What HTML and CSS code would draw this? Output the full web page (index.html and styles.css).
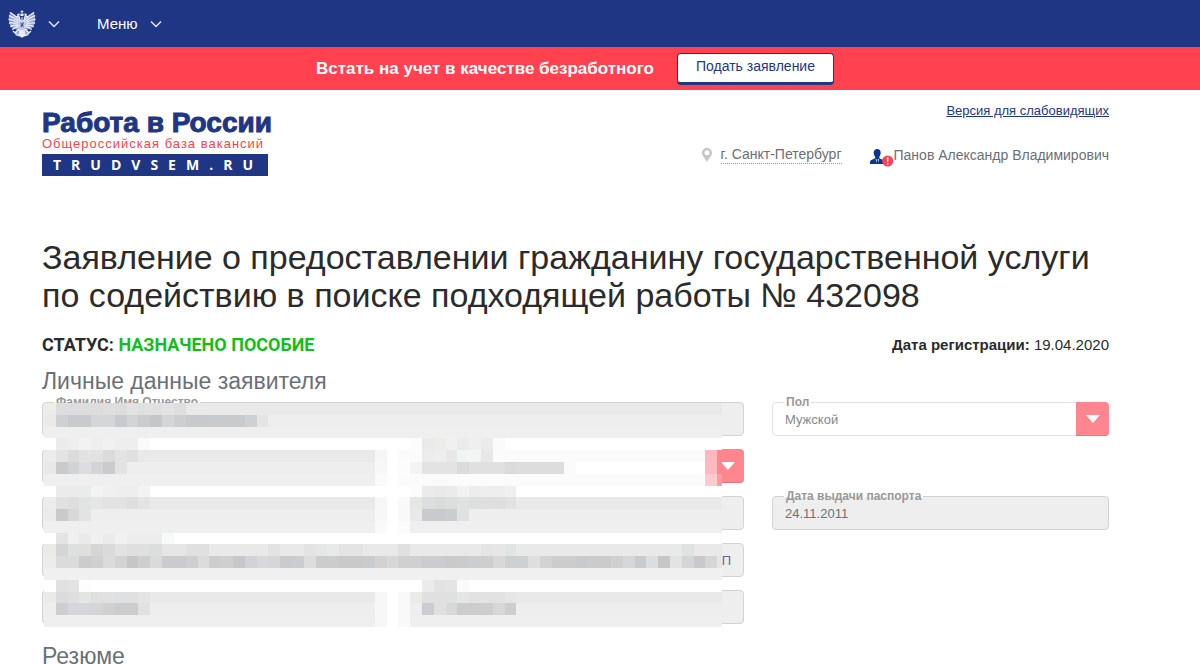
FILE: index.html
```html
<!DOCTYPE html>
<html lang="ru">
<head>
<meta charset="utf-8">
<meta name="viewport" content="width=device-width, initial-scale=1">
<title>Работа в России</title>
<link rel="stylesheet" href="styles.css">
</head>
<body>
<nav class="topbar">
  <button class="topbar-item" type="button" aria-label="Герб">
    <svg class="eagle" viewBox="0 0 28 28" aria-hidden="true">
      <path fill="#8f9dca" d="M2 3L10 8.500L14 7L18 8.500L26 3L27.500 9L25.500 17L19 20L21 25L14 27.500L7 25L9 20L2.500 17L.5 9z"/>
      <g fill="none" stroke="#e8edf9" stroke-linecap="round">
        <path stroke-width="1.3" d="M10.500 9.500C8 6.500 5 4 2.300 2.600M9.800 11C7 8.500 4 6.500 1.300 5.800M9.500 12.500C7 10.800 3.800 9.500 1 9.300M9.500 14C7 13 4 12.500 1.500 13M9.700 15.500C7.500 15 5 15.300 2.800 16.400M10 17C8 17 6 18 4.700 19.300M17.500 9.500C20 6.500 23 4 25.700 2.600M18.200 11C21 8.500 24 6.500 26.700 5.800M18.500 12.500C21 10.800 24.200 9.500 27 9.300M18.500 14C21 13 24 12.500 26.500 13M18.300 15.500C20.500 15 23 15.300 25.200 16.400M18 17C20 17 22 18 23.300 19.300"/>
        <path stroke-width="1.6" d="M12.500 11C11.500 9 11.800 7.500 10.300 6.200L8.300 7M15.500 11C16.500 9 16.200 7.500 17.700 6.200L19.700 7M11 19L7.500 22.500M17 19L20.500 22.500M5.500 21.500L8.500 24M22.500 21.500L19.500 24"/>
        <path stroke-width="1" d="M14 .7V3M13 1.600H15M9.500 4.600L11 3.800M18.500 4.600L17 3.800"/>
      </g>
      <path fill="#e8edf9" d="M12.200 3.300L13 4.200L14 2.700L15 4.200L15.800 3.300L15.500 6H12.500zM9.200 4L10.800 4.500L12 3.900L11.300 5.800H9.400zM18.800 4L17.200 4.500L16 3.900L16.700 5.800H18.600zM11.500 19C12.500 20.500 15.500 20.500 16.500 19L17.500 24L20 25.500L16.500 26L14 27.700L11.500 26L8 25.500L10.500 24z"/>
      <path fill="#aab5d8" stroke="#e8edf9" d="M11 11H17V16.500C17 18 15 19 14 19.500C13 19 11 18 11 16.500z"/>
      <path fill="none" stroke="#1f3684" stroke-width=".8" d="M12.700 13L15.300 16.500M15.500 12.500L13 17M12.500 7.500V9.500M15.500 7.500V9.500"/>
    </svg>
    <svg class="chevron" viewBox="0 0 12 8" aria-hidden="true"><path d="M1 1.500L6 6.500L11 1.500"/></svg>
  </button>
  <button class="topbar-item menu" type="button">Меню
    <svg class="chevron" viewBox="0 0 12 8" aria-hidden="true"><path d="M1 1.500L6 6.500L11 1.500"/></svg>
  </button>
</nav>

<section class="banner">
  <strong class="banner-text">Встать на учет в качестве безработного</strong>
  <button class="banner-button" type="button">Подать заявление</button>
</section>

<header class="page header">
  <a class="logo" href="#">
    <span class="logo-name">Работа в России</span>
    <span class="logo-sub">Общероссийская база вакансий</span>
    <span class="logo-site">TRUDVSEM.RU</span>
  </a>
  <div class="header-side">
    <a class="vision" href="#">Версия для слабовидящих</a>
    <div class="account">
      <a class="city" href="#">
        <svg class="pin" viewBox="0 0 10 14" aria-hidden="true"><path fill="#c4c4c4" fill-rule="evenodd" d="M5 0C2.200 0 0 2.100 0 4.900C0 8 3.300 10 5 14C6.700 10 10 8 10 4.900C10 2.100 7.800 0 5 0zM5 2.300A2.500 2.500 0 1 1 5 7.300A2.500 2.500 0 0 1 5 2.300z"/></svg>
        <span class="city-name">г. Санкт-Петербург</span>
      </a>
      <a class="user" href="#">
        <svg class="user-icon" viewBox="0 0 24 18" aria-hidden="true">
          <path fill="#0b3590" d="M7.200 0C9.300 0 10.800 1.400 10.700 3.800C10.600 6 9.800 7.200 9.300 7.900V9.300C11 10.300 14 10.600 14.300 12.500V15H0V13C.3 10.800 3.500 10.300 5.200 9.300V7.900C4.600 7.200 3.800 6 3.700 3.800C3.600 1.400 5.200 0 7.200 0z"/>
          <path fill="#fff" d="M5.500 9.800L7.200 11L9 9.800L8 14H6.500z"/>
          <path fill="#0b3590" d="M6.700 11H7.800L8.200 14H6.300z"/>
          <circle cx="17.700" cy="12" r="5.500" fill="#ff4150"/>
          <path fill="#fff" d="M16.800 8.300H18.600L18.200 13H17.200zM16.900 14H18.500V15.500H16.900z"/>
        </svg>Панов Александр Владимирович</a>
    </div>
  </div>
</header>

<main class="page">
  <h1 class="title">Заявление о предоставлении гражданину государственной услуги по содействию в поиске подходящей работы № 432098</h1>
  <div class="status-row">
    <p class="status">СТАТУС: <span class="status-value">НАЗНАЧЕНО ПОСОБИЕ</span></p>
    <p class="registered"><strong>Дата регистрации:</strong> 19.04.2020</p>
  </div>
  <h2 class="section-title">Личные данные заявителя</h2>
  <form class="form">
    <div class="field wide locked">
      <label class="label" for="name">Фамилия Имя Отчество</label>
      <input class="control" id="name" type="text" readonly>
    </div>
    <div class="field">
      <label class="label" for="sex">Пол</label>
      <select class="control" id="sex"><option>Мужской</option></select>
      <span class="arrow"></span>
    </div>
    <div class="field locked start"><input class="control" type="text" readonly></div>
    <div class="field"><select class="control"></select><span class="arrow"></span></div>
    <div class="field locked start"><input class="control" type="text" readonly></div>
    <div class="field locked"><input class="control" type="text" readonly></div>
    <div class="field locked">
      <label class="label" for="issued">Дата выдачи паспорта</label>
      <input class="control" id="issued" type="text" value="24.11.2011" readonly>
    </div>
    <div class="field wide locked start"><input class="control tail" type="text" value="П" readonly></div>
    <div class="field locked start"><input class="control" type="text" readonly></div>
    <div class="field locked"><input class="control" type="text" readonly></div>
    <svg class="mosaic" id="mosaic" viewBox="0 0 574 190" preserveAspectRatio="none" shape-rendering="crispEdges" aria-hidden="true"></svg>
  </form>
  <h2 class="section-title next">Резюме</h2>
</main>
<script src="mosaic.js"></script>
</body>
</html>
```
FILE: styles.css
```css
* { box-sizing: border-box; }

body {
  margin: 0;
  background: #fff;
  color: #2b2b2b;
  font-family: "Liberation Sans", Arial, sans-serif;
  font-size: 16px;
}

button, input, select { font: inherit; }
h1, h2, p { margin: 0; font-weight: 400; }

.topbar {
  display: flex;
  align-items: center;
  gap: 37px;
  height: 47px;
  padding: 0 8px;
  background: #1f3684;
}

.topbar-item {
  display: flex;
  align-items: center;
  gap: 12px;
  padding: 0;
  border: 0;
  background: none;
  color: #fff;
  font-size: 15px;
}

.eagle { width: 28px; height: 28px; }

.chevron {
  width: 12px;
  height: 8px;
  fill: none;
  stroke: #e4e8f5;
  stroke-width: 1.5;
}

.banner {
  display: flex;
  align-items: center;
  justify-content: center;
  gap: 23px;
  height: 43px;
  padding-right: 50px;
  background: #ff4150;
}

.banner-text { color: #fff; font-size: 17px; }

.banner-button {
  height: 32px;
  padding: 0 18px 4px;
  border: 1px solid #1f3684;
  border-bottom-width: 3px;
  border-radius: 4px;
  background: #fff;
  color: #1f3684;
  font-size: 14px;
}

.page { padding: 0 91px 0 42px; }

.header {
  display: flex;
  justify-content: space-between;
  height: 148px;
  padding-top: 12px;
}

.logo {
  display: flex;
  flex-direction: column;
  margin-top: 7px;
  text-decoration: none;
  white-space: nowrap;
}

.logo-name {
  color: #1f3684;
  font-size: 28px;
  font-weight: 700;
  line-height: 28px;
  -webkit-text-stroke: 1px #1f3684;
}

.logo-sub {
  color: #ff4150;
  font-size: 13px;
  line-height: 13px;
  letter-spacing: 1px;
}

.logo-site {
  width: 226px;
  margin-top: 4px;
  padding-left: 11px;
  background: #1f3684;
  color: #fff;
  font-family: "Open Sans", sans-serif;
  font-size: 14px;
  font-weight: 700;
  line-height: 22px;
  letter-spacing: 10px;
}

.header-side {
  display: flex;
  flex-direction: column;
  align-items: flex-end;
  gap: 26px;
}

.vision { color: #1f3684; font-size: 13px; line-height: 17px; }
.account { display: flex; gap: 28px; }

.city, .user {
  display: flex;
  align-items: center;
  height: 20px;
  color: #6b6f74;
  font-size: 14px;
  line-height: 17px;
  text-decoration: none;
}

.city { gap: 9px; }
.city-name { border-bottom: 1px dotted #999; }
.pin { width: 10px; height: 14px; }
.user-icon { width: 24px; height: 18px; margin-top: 6px; }

.title {
  font-size: 34px;
  line-height: 38px;
}

.status-row {
  display: flex;
  align-items: center;
  justify-content: space-between;
  height: 32px;
  margin-top: 14px;
}

.status {
  font-family: Roboto, sans-serif;
  font-size: 18px;
  font-weight: 700;
}

.status-value { color: #15bd1c; }
.registered { font-size: 15px; }

.section-title {
  margin-top: 8px;
  color: #6a7077;
  font-size: 23px;
  line-height: 26px;
}

.form {
  position: relative;
  display: grid;
  grid-template-columns: repeat(3, 1fr);
  gap: 13px 28px;
  margin-top: 8px;
}

.field { position: relative; height: 34px; }
.wide { grid-column-end: span 2; }
.start { grid-column-start: 1; }

.control {
  display: block;
  width: 100%;
  height: 100%;
  padding: 0 12px;
  border: 1px solid #e2e2e2;
  border-radius: 4px;
  background: #fff;
  color: #85888b;
  font-size: 13px;
  appearance: none;
}

.locked .control { border-color: #d3d3d3; background: #eee; color: #6f7275; }
.locked .tail { color: #5b6b8c; text-align: right; }

.label {
  position: absolute;
  top: -7px;
  left: 12px;
  padding: 0 2px;
  background: linear-gradient(#fff 8px, transparent 8px);
  color: #999;
  font-size: 12px;
  font-weight: 700;
  line-height: 14px;
}

.arrow {
  position: absolute;
  inset: 0 0 0 auto;
  display: grid;
  place-items: center;
  width: 33px;
  border-bottom: 1px solid #e87680;
  border-radius: 0 4px 4px 0;
  background: #ff868f;
  pointer-events: none;
}

.arrow::before {
  content: "";
  border: 7px solid transparent;
  border-top: 8px solid #fff;
  border-bottom: 0;
}

.mosaic {
  position: absolute;
  top: 1px;
  left: 2px;
  width: 678px;
  height: 224px;
}

.next { margin-top: 19px; }
```
FILE: mosaic.js
```js
// Each row is a list of "first-last:colour" runs; later runs paint over earlier ones.
const rows = [
  "0-57:e9e9e9 0:ececea 1-4:dcdddc 5:dfdfdf 6:dcdcdc 7:e1e4e3 8-9:e0e0e0 10:e3e3e3 11:dedede",
  "0-57:eeeeee 0:ebeae9 1:ced1d4 2-3:c9cacd 4-5:d5d6d8 6:c9cacf 7:d3d4d6 8:cbccce 9:c5c6c8 10:d4d5d7 11:cdcecf 12-13:c8c9cc 14:c8cbcd 15-16:c8cacc 17:ced1d4 18:e3e5e5",
  "0-57:efefef",
  "0-57:ffffff 1:ebebe9 2:eeeeee 3:f2f2f2 4:eeeeee 5:f1f1f1 6-7:eeeeee 8:fafafa 31:fefcfa 32:e9eaec 33:ecece9 34:f0f0f0 35:ebebeb 36:efefef 37:ebebea 38:fbfbfb",
  "0-27:e9e9e9 28:f6f6f6 29:ffffff 30-55:fbfbfb 0:ececea 1:e3e3e3 2:dbdbdb 3-4:e2e2e2 5:dadada 6:e3e3e3 7:e0e0e0 32:ececec 33:eeeeec 34:e7e7e7 35:f0f4f3 36:f2f5f4 37:e8e8e8 56:ffb8bf 57:ff858e",
  "0-27:eeeeee 28:f7f7f7 29:ffffff 30:fcfcfc 31:f3f3f3 0:e8e8e8 1:c9cacc 2:d2d3d5 3:dcdde0 4:d4d4d4 5:cacbce 6:e2e3e2 32-34:e3e3e3 35:dbdbdb 36-38:e0e0e0 39:dadada 40-43:dddddd 44:fbfbfb 45-55:ffffff 56:ffb8bf 57:ff858e",
  "0-27:efefef 28:fafafa 29:ffffff 30-55:fbfbfb 56:ffc9cf 57:ff9aa3",
  "0-57:ffffff 1-2:ebebeb 3:e9ecec 4:f3f3f3 5:f0f0f0 6-7:eeeeee 8:f3f3f3 31:fefcfa 32:ebebeb 33:e9e9e9 34:ebebeb 35:f2f2f0 36:eceeee 37-38:eeeeee 39:f0f0f0",
  "0-57:e9e9e9 0:ececec 1:e0e0e0 2:dedede 3:e2e4e3 4:e6e6e6 5-6:e2e2e2 7:dedede 8:e4e4e4 28:f7f7f7 29:ffffff 30:f9f9f9 31:e6e7e5 32:dcdedd 33:dadcdc 34:dcdedd 35:dfe2e0 36:dddfdd 37:dfdfdf 38:dedede 39:e1e3e2",
  "0-57:eeeeee 0:ebebeb 1:cacaca 2:d7d8da 3:e1e3e4 28:f7f7f7 29:ffffff 30:f9f9f9 31:e8e8e8 32-33:c9cace 34:cacdd0 35:dfe1e1",
  "0-57:efefef 28:fafafa 29:ffffff 30:fbfbfb",
  "0-57:ffffff 1:e4e4e4 2:f0f0f0 3:eaeaea 4:f0f0ee 5:ebebeb 6:f1f1f1 7-9:ededed 10:f6f9f8",
  "0-57:e9e9e9 0:eaeae6 1:d5d5d5 2:dee0df 3:dfe0dc 4:d5d5d5 5:dadada 6:e2e2e2 7-8:dfdfdf 9:dbdedd 10-11:e6e6e6 12-13:e0e0e0 19:e1e4e3 22:e3e3e3 23:e4e7e6 25-26:e4e4e4 30:e0e0e0 37:e4e4e4 38:e6e6e6 39:e1e4e3 54:e0e2e1",
  "0:ececec 1-2:d9dbdc 3:cbcccd 4:cfd0d2 5:dadbdd 6:d2d4d2 7:c5c6c8 8:cdcecf 9:d9dadc 10-11:cacbcf 12:cecfd2 13:dcdcdc 14:cccdce 15:cecfcf 16:c8c8cb 17:d2d3d9 18:d8d9dd 19:d6d6d6 20:cacbce 21:cacdd0 22:dcdddf 23-24:cbcccd 25-26:c9c9ca 27:c8cccf 28:d2d2d2 29:d6d8d7 30-31:cfd0d2 32-33:cbccd0 34:cacaca 35:c8cccf 36:cccdcf 37:cdcfcd 38:d8d8d8 39-40:ced1d3 41:dedede 42:d2d3d4 43-44:cbcccd 45:c7cbcd 46-47:cbcbcd 48:d1d0d0 49:d6d7d9 50:c8cccf 51:dcdddf 52:c6c6c9 53:e2e3e4 54:d4d5d6 55:c8c8cd 56:d5d5d7 57:e8e6e4",
  "0-57:f0f0f0",
  "0-57:ffffff 1:e0e1e3 2:e3e3e3 3:fcfefd 32:ebebeb 33:e2e2e2 34:e4e4e2 35:fafafa",
  "0-57:e9e9e9 0:eaeae7 1:dadbdd 2:dedede 3:e3e5e4 4:dfdfdf 5:e1e1e1 6:dfe0e2 7:e0e0e0 8:e4e4e4 28:f7f7f7 29:ffffff 30:f9f9f9 31:eaeae7 32-34:e0e0e0 35:e4e6e5 36-38:e2e2e2 39:e5e5e5",
  "0-57:eeeeee 1:cdced0 2-3:d5d6d9 4:d4d6d5 5:cfd0d1 6-7:ccccce 8:e0e1e3 28:f7f7f7 29:ffffff 30:f9f9f9 32:cbcccf 33:dfe0e0 34:d7d8da 35-36:cbccce 37:cdcfcf 38:d6d7d9 39:cdced0",
  "0-57:efefef 28:f7f7f7 29:ffffff 30:f9f9f9"
];

const mosaic = document.getElementById("mosaic");
rows.forEach((row, y) => {
  row.split(" ").forEach((run) => {
    const [range, colour] = run.split(":");
    const [first, last = first] = range.split("-").map(Number);
    const rect = document.createElementNS("http://www.w3.org/2000/svg", "rect");
    rect.setAttribute("x", first * 10);
    rect.setAttribute("y", y * 10);
    rect.setAttribute("width", (last - first + 1) * 10);
    rect.setAttribute("height", 10);
    rect.setAttribute("fill", "#" + colour);
    mosaic.append(rect);
  });
});
```
